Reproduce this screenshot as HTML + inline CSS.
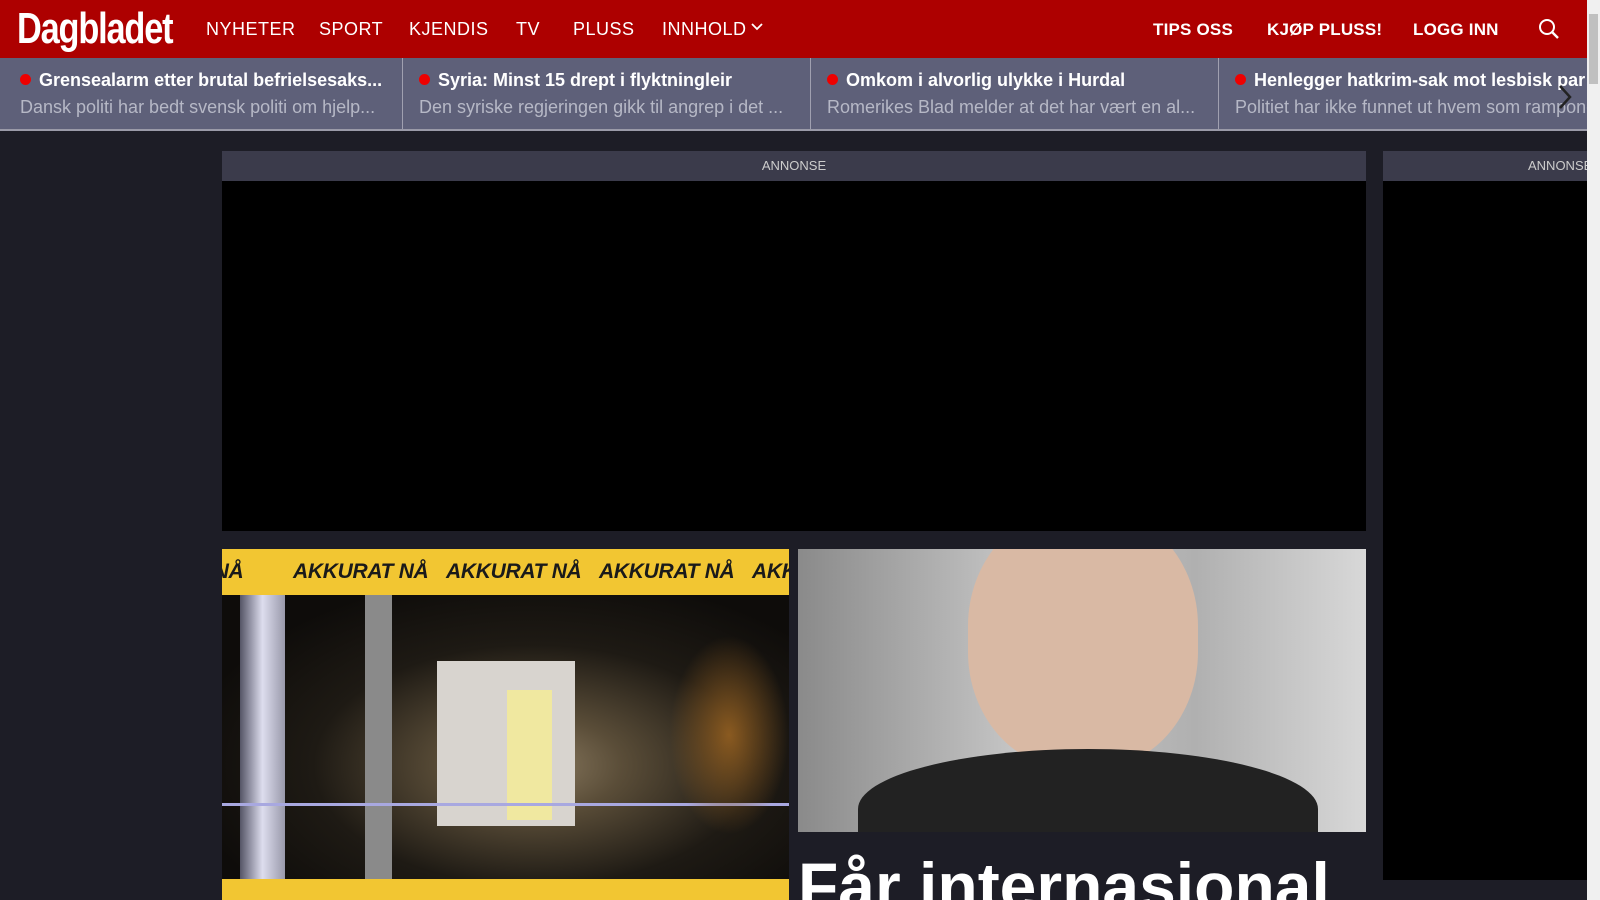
<!DOCTYPE html>
<html><head><meta charset="utf-8"><style>
*{margin:0;padding:0;box-sizing:border-box}
body{width:1600px;height:900px;overflow:hidden;background:#1d1d26;font-family:"Liberation Sans",sans-serif;position:relative}
.hdr{position:absolute;left:0;top:0;width:1587px;height:58px;background:#ad0000}
.logo{position:absolute;left:17px;top:4px;color:#fff;font-family:"Liberation Sans Narrow","Liberation Sans",sans-serif;font-weight:bold;font-size:44px;letter-spacing:-1.5px;transform:scaleX(0.78);transform-origin:left;line-height:50px}
.nav{position:absolute;top:19px;color:#fff;font-size:18px;letter-spacing:0.5px}
.nr{position:absolute;top:20px;color:#fff;font-size:17px;font-weight:bold;letter-spacing:0.2px}
.tick{position:absolute;left:0;top:58px;width:1587px;height:73px;background:#5e6079;border-bottom:2px solid #9a9aa8}
.it{position:absolute;top:0;height:71px;border-right:1px solid #a0a0b0;padding:12px 0 0 20px;overflow:hidden;white-space:nowrap}
.it b{display:block;color:#fff;font-size:18px;margin-bottom:6px}
.it b:before{content:"";display:inline-block;width:11px;height:11px;border-radius:50%;background:#e00;margin-right:8px;vertical-align:1px}
.it span{color:#b6b8c6;font-size:18px}
.sb{position:absolute;left:1587px;top:0;width:13px;height:900px;background:#f0f0f0}
.ak{position:absolute;left:222px;top:549px;width:567px;height:46px;background:#f2c632;overflow:hidden;white-space:nowrap;font-weight:bold;font-style:italic;font-size:21px;line-height:46px;color:#1a1a1a;letter-spacing:-0.3px}
.ak span{position:absolute;top:0}
</style></head><body>
<div class="hdr">
<div class="logo">Dagbladet</div>
<div class="nav" style="left:206px">NYHETER</div>
<div class="nav" style="left:319px">SPORT</div>
<div class="nav" style="left:409px">KJENDIS</div>
<div class="nav" style="left:516px">TV</div>
<div class="nav" style="left:573px">PLUSS</div>
<div class="nav" style="left:662px">INNHOLD</div>
<svg style="position:absolute;left:751px;top:23px" width="12" height="8" viewBox="0 0 12 8"><path d="M1 1l5 5 5-5" fill="none" stroke="#fff" stroke-width="1.8"/></svg>
<div class="nr" style="left:1153px">TIPS OSS</div>
<div class="nr" style="left:1267px">KJØP PLUSS!</div>
<div class="nr" style="left:1413px">LOGG INN</div>
<svg style="position:absolute;left:1537px;top:17px" width="24" height="24" viewBox="0 0 24 24"><circle cx="10" cy="10" r="7" fill="none" stroke="#fff" stroke-width="2"/><path d="M15 15l6 6" stroke="#fff" stroke-width="2.4"/></svg>
</div>
<div class="tick">
<div class="it" style="left:0;width:403px"><b>Grensealarm etter brutal befrielsesaks...</b><span>Dansk politi har bedt svensk politi om hjelp...</span></div>
<div class="it" style="left:403px;width:408px;padding-left:16px"><b>Syria: Minst 15 drept i flyktningleir</b><span>Den syriske regjeringen gikk til angrep i det ...</span></div>
<div class="it" style="left:811px;width:408px;padding-left:16px"><b>Omkom i alvorlig ulykke i Hurdal</b><span>Romerikes Blad melder at det har vært en al...</span></div>
<div class="it" style="left:1219px;width:368px;padding-left:16px;border:none"><b>Henlegger hatkrim-sak mot lesbisk par</b><span>Politiet har ikke funnet ut hvem som ramponerte</span></div>
<svg style="position:absolute;left:1558px;top:26px" width="14" height="26" viewBox="0 0 14 26"><path d="M2 2l10 11L2 24" fill="none" stroke="#222" stroke-width="2.5"/></svg>
</div>
<div style="position:absolute;left:222px;top:151px;width:1144px;height:30px;background:#3b3b4b;color:#ccc;font-size:13px;text-align:center;line-height:30px">ANNONSE</div>
<div style="position:absolute;left:222px;top:181px;width:1144px;height:350px;background:#000"></div>
<div style="position:absolute;left:1383px;top:151px;width:204px;height:30px;background:#3b3b4b;color:#ccc;font-size:13px;line-height:30px;padding-left:145px;white-space:nowrap;overflow:hidden">ANNONSE</div>
<div style="position:absolute;left:1383px;top:181px;width:204px;height:699px;background:#000"></div>
<div class="ak"><span style="left:-114px">AKKURAT NÅ</span><span style="left:71px">AKKURAT NÅ</span><span style="left:224px">AKKURAT NÅ</span><span style="left:377px">AKKURAT NÅ</span><span style="left:530px">AKKURAT NÅ</span></div>
<div style="position:absolute;left:222px;top:595px;width:567px;height:284px;background:radial-gradient(ellipse at 55% 60%,#8a7a60 0,#5a4d38 20%,#1e1a14 50%,#0e0c0a 80%);overflow:hidden">
<div style="position:absolute;left:18px;top:0;width:45px;height:284px;background:linear-gradient(90deg,#556,#dde,#99a)"></div>
<div style="position:absolute;left:143px;top:0;width:27px;height:284px;background:#8a8a8a"></div>
<div style="position:absolute;left:215px;top:66px;width:138px;height:165px;background:#d8d4cf"></div>
<div style="position:absolute;left:285px;top:95px;width:45px;height:130px;background:#f0e8a0"></div>
<div style="position:absolute;left:0;top:208px;width:567px;height:3px;background:#a8a8e0"></div>
<div style="position:absolute;right:0;top:40px;width:120px;height:200px;background:radial-gradient(#8a5a20,transparent 70%)"></div>
</div>
<div style="position:absolute;left:222px;top:879px;width:567px;height:21px;background:#f2c632"></div>
<div style="position:absolute;left:798px;top:549px;width:568px;height:283px;background:linear-gradient(90deg,#8a8a8a,#c8c8c8 40%,#b0b0b0 70%,#d8d8d8);overflow:hidden">
<div style="position:absolute;left:170px;top:-40px;width:230px;height:260px;border-radius:45%;background:#d9b9a4"></div>
<div style="position:absolute;left:60px;top:200px;width:460px;height:120px;border-radius:50% 50% 0 0;background:#222"></div>
</div>
<div style="position:absolute;left:798px;top:832px;width:568px;height:68px;background:#1d1d26;color:#fff;font-weight:bold;font-size:66px;line-height:68px;padding-top:20px;white-space:nowrap;overflow:hidden">Får internasjonal</div>
<div class="sb"><div style="position:absolute;left:2px;top:14px;width:9px;height:70px;background:#c0c0c0"></div></div>
</body></html>
